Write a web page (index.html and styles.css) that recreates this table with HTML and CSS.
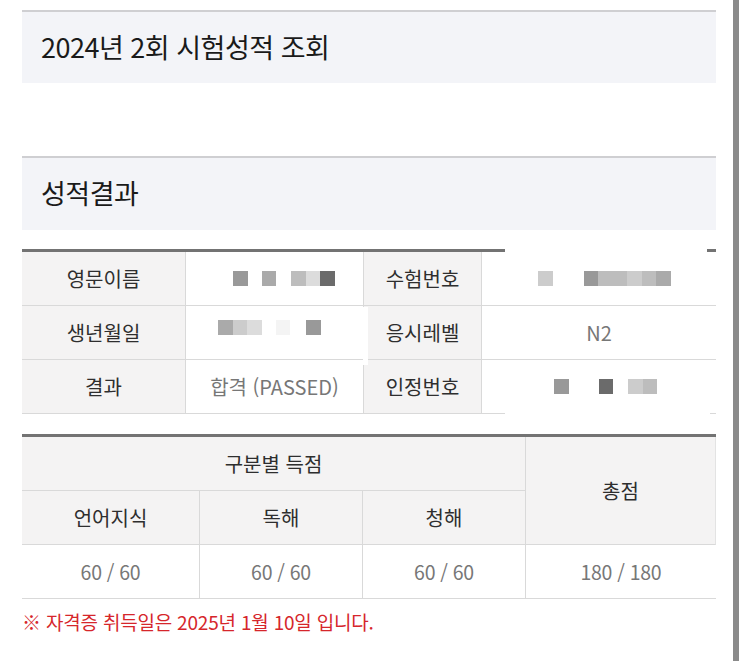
FILE: index.html
```html
<!DOCTYPE html>
<html lang="ko">
<head>
<meta charset="utf-8">
<title>2024년 2회 시험성적 조회</title>
<link rel="stylesheet" href="styles.css">
</head>
<body>
<div class="page">
  <main class="content">
    <h1 class="box-title">2024년 2회 시험성적 조회</h1>
    <h2 class="box-title second">성적결과</h2>

    <div class="info">
      <div class="lbl">영문이름</div>
      <div class="val start p47">
        <span class="sq g2"></span><span class="gap14"></span><span class="sq g3"></span><span class="gap15"></span><span class="sq g4"></span><span class="sq g6"></span><span class="sq g1"></span>
      </div>
      <div class="lbl">수험번호</div>
      <div class="val start p56">
        <span class="sq g5"></span><span class="gap31"></span><span class="sq g2"></span><span class="sq g4"></span><span class="sq g4"></span><span class="sq g5"></span><span class="sq g4"></span><span class="sq g3"></span>
      </div>

      <div class="lbl">생년월일</div>
      <div class="val start p32 up">
        <span class="sq g3"></span><span class="sq g5"></span><span class="sq g6"></span><span class="gap14"></span><span class="sq g7"></span><span class="gap16"></span><span class="sq g2"></span>
      </div>
      <div class="lbl">응시레벨</div>
      <div class="val">N2</div>

      <div class="lbl">결과</div>
      <div class="val">합격 (PASSED)</div>
      <div class="lbl">인정번호</div>
      <div class="val start p72">
        <span class="sq g2"></span><span class="gap30"></span><span class="sq g1"></span><span class="gap15"></span><span class="sq g5"></span><span class="sq g4"></span>
      </div>

      <div class="patch patch-top"></div>
      <div class="patch patch-mid"></div>
      <div class="patch patch-bot"></div>
    </div>

    <div class="scores">
      <div class="hd span3">구분별 득점</div>
      <div class="hd total">총점</div>
      <div class="hd">언어지식</div>
      <div class="hd bl">독해</div>
      <div class="hd bl">청해</div>
      <div class="num">60 / 60</div>
      <div class="num bl">60 / 60</div>
      <div class="num bl">60 / 60</div>
      <div class="num bl">180 / 180</div>
    </div>

    <p class="note">※ 자격증 취득일은 2025년 1월 10일 입니다.</p>
  </main>
  <div class="gutter"></div>
  <div class="scrollbar"></div>
</div>
</body>
</html>
```

FILE: styles.css
```css
* { box-sizing: border-box; }

html, body {
  margin: 0;
  padding: 0;
  background: #ffffff;
}

body {
  font-family: "Noto Sans CJK KR", "Noto Sans", sans-serif;
  color: #333;
}

.page {
  display: grid;
  grid-template-columns: 22px 694px 17px 6px 4px;
  height: 661px;
  overflow: hidden;
}

.content {
  grid-column: 2;
  padding-top: 10px;
}

.gutter { grid-column: 3; }

.scrollbar {
  grid-column: 4;
  background: #8a8a8a;
  height: 661px;
}

.box-title {
  margin: 0;
  height: 73px;
  border-top: 2px solid #cfcfd2;
  background: #f3f4f8;
  display: flex;
  align-items: center;
  padding: 0 0 3px 19px;
  font-size: 27px;
  font-weight: 400;
  letter-spacing: -0.5px;
  color: #1a1a1a;
}

.box-title.second {
  margin-top: 73px;
  height: 74px;
}

/* info table */
.info {
  position: relative;
  margin-top: 19px;
  display: grid;
  grid-template-columns: 163px 178px 118px 235px;
  grid-auto-rows: 54px;
  border-top: 3px solid #737373;
}

.info > div:not(.patch) {
  border-bottom: 1px solid #d9d9d9;
  display: flex;
  align-items: center;
  justify-content: center;
  font-size: 20px;
  position: relative;
  z-index: 1;
}

.info .lbl {
  background: #f4f3f3;
  color: #2e2e2e;
}

.info .lbl:not(:nth-child(4n+1)),
.info .val {
  border-left: 1px solid #d9d9d9;
}

.info .val {
  background: transparent;
  color: #777;
  font-size: 19px;
}

.info .val.start { justify-content: flex-start; }
.info .val.up { padding-bottom: 10px; }
.p47 { padding-left: 47px; }
.p56 { padding-left: 56px; }
.p32 { padding-left: 32px; }
.p72 { padding-left: 72px; }

.sq {
  display: inline-block;
  width: 14.5px;
  height: 15px;
  flex: none;
}
.gap14 { display: inline-block; width: 14px; flex: none; }
.gap15 { display: inline-block; width: 15px; flex: none; }
.gap16 { display: inline-block; width: 16px; flex: none; }
.gap30 { display: inline-block; width: 30px; flex: none; }
.gap31 { display: inline-block; width: 31px; flex: none; }

.g1 { background: #6b6b6b; }
.g2 { background: #999999; }
.g3 { background: #aaaaaa; }
.g4 { background: #bdbdbd; }
.g5 { background: #cccccc; }
.g6 { background: #dcdcdc; }
.g7 { background: #f4f4f4; }

.patch {
  position: absolute;
  background: #ffffff;
}
.patch-top {
  left: 483px;
  top: -4px;
  width: 202px;
  height: 8px;
  z-index: 2;
}
.patch-mid {
  left: 178px;
  top: 55px;
  width: 168px;
  height: 58px;
  z-index: 2;
}
.patch-bot {
  left: 483px;
  top: 158px;
  width: 205px;
  height: 8px;
  z-index: 2;
}
.info .val.up { z-index: 3; }

/* score table */
.scores {
  margin-top: 20px;
  display: grid;
  grid-template-columns: 177px 163px 163px 191px;
  grid-template-rows: 54px 54px 54px;
  border-top: 3px solid #737373;
}

.scores > div {
  display: flex;
  align-items: center;
  justify-content: center;
  font-size: 20px;
  border-bottom: 1px solid #d9d9d9;
}

.scores .hd {
  background: #f4f3f3;
  color: #2e2e2e;
}

.scores .span3 { grid-column: 1 / 4; }

.scores .total {
  grid-column: 4;
  grid-row: 1 / 3;
  border-left: 1px solid #d9d9d9;
  border-right: 1px solid #e3e3e3;
}

.scores .bl { border-left: 1px solid #d9d9d9; }

.scores .num {
  color: #777;
  background: #fff;
  font-size: 19.5px;
  letter-spacing: -0.3px;
}

.note {
  margin: 11px 0 0;
  font-size: 19px;
  line-height: 24px;
  color: #d6262b;
  letter-spacing: -0.2px;
}
```
